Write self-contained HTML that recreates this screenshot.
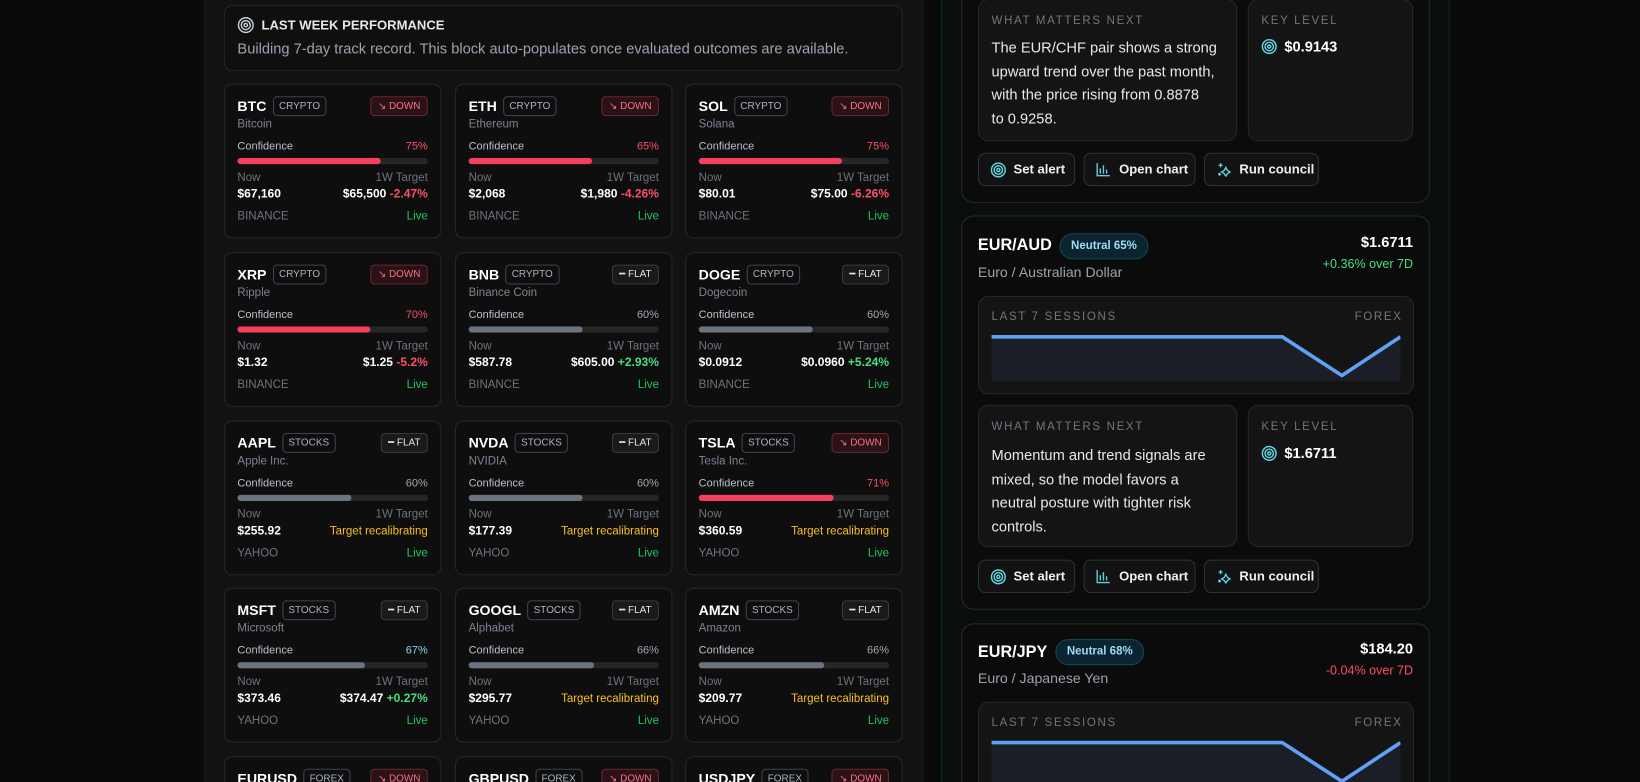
<!DOCTYPE html>
<html><head><meta charset="utf-8">
<style>
*{box-sizing:border-box;margin:0;padding:0}
html,body{width:1640px;height:782px;overflow:hidden;background:#0a0a0a;font-family:"Liberation Sans",sans-serif}
#w{position:absolute;left:0;top:0;width:1568px;height:748px;overflow:hidden;transform:scale(1.04592);transform-origin:0 0}
.abs{position:absolute}
#lp{left:195px;top:0;width:688px;height:748px;background:#121212;border-left:1px solid #1c1c1c;border-right:1px solid #1c1c1c}
#rp{left:900px;top:0;width:486px;height:748px;background:#0a0e0f;border-left:1px solid #0f3036;border-right:1px solid #1a2426}
.hdr{left:214px;top:5px;width:649px;height:63px;border:1px solid #262626;border-radius:8px;background:#0f0f0f}
.hdr .t{position:absolute;left:35px;top:11px;font-size:12.5px;font-weight:bold;color:#e5e7eb}
.hdr .s{position:absolute;left:12px;top:32px;font-size:14px;color:#9aa4b2}
.c{position:absolute;width:208px;height:148px;border:1px solid #262626;border-radius:8px;background:#0e0e0e}
.c .hd{position:absolute;left:12px;top:11px;display:flex;align-items:center;gap:6px}
.c .tk{font-size:13.5px;font-weight:bold;color:#fff}
.c .ty{height:19px;border:1px solid #3a4453;border-radius:4px;font-size:9.5px;color:#aab3bf;padding:0 5px;line-height:17px}
.c .dir{position:absolute;right:12px;top:11px;height:19px;border-radius:4px;font-size:9.5px;padding:0 6px;line-height:17px}
.dn{background:#2a1216;border:1px solid #6b2430;color:#fb7185}
.fl{background:#1a1a1a;border:1px solid #3a3a3a;color:#e5e5e5}
.c .nm{position:absolute;left:12px;top:32px;font-size:11px;color:#7b8491}
.c .cl{position:absolute;left:12px;top:53px;font-size:10.5px;color:#b8c0cc}
.c .cp{position:absolute;right:12px;top:53px;font-size:10.5px}
.c .bar{position:absolute;left:12px;right:12px;top:70px;height:6px;border-radius:3px;background:#262626;overflow:hidden}
.c .bar i{display:block;height:6px;border-radius:3px}
.c .nw{position:absolute;left:12px;top:83px;font-size:11px;color:#6b7480}
.c .tg{position:absolute;right:12px;top:83px;font-size:11px;color:#6b7480}
.c .v1{position:absolute;left:12px;top:99px;font-size:11.5px;font-weight:bold;color:#fff}
.c .v2{position:absolute;right:12px;top:99px;font-size:11.5px;font-weight:bold;color:#fff}
.c .src{position:absolute;left:12px;top:120px;font-size:11px;color:#6b7480}
.c .lv{position:absolute;right:12px;top:120px;font-size:11px;color:#22c55e}
.r{color:#fb5067}.g{color:#4ade80}.c .y{color:#fbbf24;font-weight:normal;font-size:11px}.gy{color:#a0a8b4}
.red{background:#f43f5e}.gr{background:#6b7280}
.rc{position:absolute;left:919px;width:448px;border:1px solid #242a2c;border-radius:12px;background:#0b0b0b}
.box{position:absolute;background:#141414;border:1px solid #272727;border-radius:10px}
.lbl{position:absolute;font-size:11px;letter-spacing:1.6px;color:#6f7580}
.btn{position:absolute;height:32px;border:1px solid #2a323d;border-radius:7px;background:#121212;color:#f0f0f0;font-size:12.5px;font-weight:bold;line-height:30px;padding-left:33px}
.btn svg{position:absolute;left:11px;top:8px}
.pill{position:absolute;height:25px;border:1px solid #164656;border-radius:13px;background:#0b2430;color:#9ddcf5;font-size:11px;font-weight:bold;line-height:23px;padding:0 10px}
.ttl{position:absolute;font-size:15.5px;font-weight:bold;color:#fff}
.sub{position:absolute;font-size:13.5px;color:#9aa3ad}
.pr{position:absolute;font-size:14px;font-weight:bold;color:#fff;text-align:right}
.ch{position:absolute;font-size:12px;text-align:right}
.wt{position:absolute;font-size:14px;line-height:22.5px;color:#e8e8e8;white-space:nowrap}
.kv{position:absolute;font-size:14px;font-weight:bold;color:#fff}
</style></head><body><div id="w">
<div class="abs" id="lp"></div>
<div class="abs" id="rp"></div>

<div class="abs hdr"><svg class="abs" style="left:12px;top:10px" width="16" height="16" viewBox="0 0 16 16" fill="none" stroke="#c9ced6" stroke-width="1.4"><circle cx="8" cy="8" r="7"/><circle cx="8" cy="8" r="4.3"/><circle cx="8" cy="8" r="1.6"/></svg><div class="t">LAST WEEK PERFORMANCE</div><div class="s">Building 7-day track record. This block auto-populates once evaluated outcomes are available.</div></div>

<div class="c" style="left:214px;top:80px"><div class="hd"><span class="tk">BTC</span><span class="ty">CRYPTO</span></div><div class="dir dn">↘ DOWN</div><div class="nm">Bitcoin</div><div class="cl">Confidence</div><div class="cp r">75%</div><div class="bar"><i class="red" style="width:75%"></i></div><div class="nw">Now</div><div class="tg">1W Target</div><div class="v1">$67,160</div><div class="v2">$65,500 <span class="r">-2.47%</span></div><div class="src">BINANCE</div><div class="lv">Live</div></div>
<div class="c" style="left:435px;top:80px"><div class="hd"><span class="tk">ETH</span><span class="ty">CRYPTO</span></div><div class="dir dn">↘ DOWN</div><div class="nm">Ethereum</div><div class="cl">Confidence</div><div class="cp r">65%</div><div class="bar"><i class="red" style="width:65%"></i></div><div class="nw">Now</div><div class="tg">1W Target</div><div class="v1">$2,068</div><div class="v2">$1,980 <span class="r">-4.26%</span></div><div class="src">BINANCE</div><div class="lv">Live</div></div>
<div class="c" style="left:655px;top:80px"><div class="hd"><span class="tk">SOL</span><span class="ty">CRYPTO</span></div><div class="dir dn">↘ DOWN</div><div class="nm">Solana</div><div class="cl">Confidence</div><div class="cp r">75%</div><div class="bar"><i class="red" style="width:75%"></i></div><div class="nw">Now</div><div class="tg">1W Target</div><div class="v1">$80.01</div><div class="v2">$75.00 <span class="r">-6.26%</span></div><div class="src">BINANCE</div><div class="lv">Live</div></div>

<div class="c" style="left:214px;top:241px"><div class="hd"><span class="tk">XRP</span><span class="ty">CRYPTO</span></div><div class="dir dn">↘ DOWN</div><div class="nm">Ripple</div><div class="cl">Confidence</div><div class="cp r">70%</div><div class="bar"><i class="red" style="width:70%"></i></div><div class="nw">Now</div><div class="tg">1W Target</div><div class="v1">$1.32</div><div class="v2">$1.25 <span class="r">-5.2%</span></div><div class="src">BINANCE</div><div class="lv">Live</div></div>
<div class="c" style="left:435px;top:241px"><div class="hd"><span class="tk">BNB</span><span class="ty">CRYPTO</span></div><div class="dir fl">━ FLAT</div><div class="nm">Binance Coin</div><div class="cl">Confidence</div><div class="cp gy">60%</div><div class="bar"><i class="gr" style="width:60%"></i></div><div class="nw">Now</div><div class="tg">1W Target</div><div class="v1">$587.78</div><div class="v2">$605.00 <span class="g">+2.93%</span></div><div class="src">BINANCE</div><div class="lv">Live</div></div>
<div class="c" style="left:655px;top:241px"><div class="hd"><span class="tk">DOGE</span><span class="ty">CRYPTO</span></div><div class="dir fl">━ FLAT</div><div class="nm">Dogecoin</div><div class="cl">Confidence</div><div class="cp gy">60%</div><div class="bar"><i class="gr" style="width:60%"></i></div><div class="nw">Now</div><div class="tg">1W Target</div><div class="v1">$0.0912</div><div class="v2">$0.0960 <span class="g">+5.24%</span></div><div class="src">BINANCE</div><div class="lv">Live</div></div>

<div class="c" style="left:214px;top:402px"><div class="hd"><span class="tk">AAPL</span><span class="ty">STOCKS</span></div><div class="dir fl">━ FLAT</div><div class="nm">Apple Inc.</div><div class="cl">Confidence</div><div class="cp gy">60%</div><div class="bar"><i class="gr" style="width:60%"></i></div><div class="nw">Now</div><div class="tg">1W Target</div><div class="v1">$255.92</div><div class="v2 y">Target recalibrating</div><div class="src">YAHOO</div><div class="lv">Live</div></div>
<div class="c" style="left:435px;top:402px"><div class="hd"><span class="tk">NVDA</span><span class="ty">STOCKS</span></div><div class="dir fl">━ FLAT</div><div class="nm">NVIDIA</div><div class="cl">Confidence</div><div class="cp gy">60%</div><div class="bar"><i class="gr" style="width:60%"></i></div><div class="nw">Now</div><div class="tg">1W Target</div><div class="v1">$177.39</div><div class="v2 y">Target recalibrating</div><div class="src">YAHOO</div><div class="lv">Live</div></div>
<div class="c" style="left:655px;top:402px"><div class="hd"><span class="tk">TSLA</span><span class="ty">STOCKS</span></div><div class="dir dn">↘ DOWN</div><div class="nm">Tesla Inc.</div><div class="cl">Confidence</div><div class="cp r">71%</div><div class="bar"><i class="red" style="width:71%"></i></div><div class="nw">Now</div><div class="tg">1W Target</div><div class="v1">$360.59</div><div class="v2 y">Target recalibrating</div><div class="src">YAHOO</div><div class="lv">Live</div></div>

<div class="c" style="left:214px;top:562px"><div class="hd"><span class="tk">MSFT</span><span class="ty">STOCKS</span></div><div class="dir fl">━ FLAT</div><div class="nm">Microsoft</div><div class="cl">Confidence</div><div class="cp" style="color:#8fd3ef">67%</div><div class="bar"><i class="gr" style="width:67%"></i></div><div class="nw">Now</div><div class="tg">1W Target</div><div class="v1">$373.46</div><div class="v2">$374.47 <span class="g">+0.27%</span></div><div class="src">YAHOO</div><div class="lv">Live</div></div>
<div class="c" style="left:435px;top:562px"><div class="hd"><span class="tk">GOOGL</span><span class="ty">STOCKS</span></div><div class="dir fl">━ FLAT</div><div class="nm">Alphabet</div><div class="cl">Confidence</div><div class="cp gy">66%</div><div class="bar"><i class="gr" style="width:66%"></i></div><div class="nw">Now</div><div class="tg">1W Target</div><div class="v1">$295.77</div><div class="v2 y">Target recalibrating</div><div class="src">YAHOO</div><div class="lv">Live</div></div>
<div class="c" style="left:655px;top:562px"><div class="hd"><span class="tk">AMZN</span><span class="ty">STOCKS</span></div><div class="dir fl">━ FLAT</div><div class="nm">Amazon</div><div class="cl">Confidence</div><div class="cp gy">66%</div><div class="bar"><i class="gr" style="width:66%"></i></div><div class="nw">Now</div><div class="tg">1W Target</div><div class="v1">$209.77</div><div class="v2 y">Target recalibrating</div><div class="src">YAHOO</div><div class="lv">Live</div></div>

<div class="c" style="left:214px;top:723px"><div class="hd"><span class="tk">EURUSD</span><span class="ty">FOREX</span></div><div class="dir dn">↘ DOWN</div></div>
<div class="c" style="left:435px;top:723px"><div class="hd"><span class="tk">GBPUSD</span><span class="ty">FOREX</span></div><div class="dir dn">↘ DOWN</div></div>
<div class="c" style="left:655px;top:723px"><div class="hd"><span class="tk">USDJPY</span><span class="ty">FOREX</span></div><div class="dir dn">↘ DOWN</div></div>

<div class="rc" style="top:-30px;height:224px">
 <div class="box" style="left:15px;top:28px;width:248px;height:136px"><div class="lbl" style="left:12px;top:14px">WHAT MATTERS NEXT</div><div class="wt" style="left:12px;top:34px">The EUR/CHF pair shows a strong<br>upward trend over the past month,<br>with the price rising from 0.8878<br>to 0.9258.</div></div>
 <div class="box" style="left:273px;top:28px;width:158px;height:136px"><div class="lbl" style="left:12px;top:14px">KEY LEVEL</div><svg class="abs" style="left:12px;top:37px" width="15" height="15" viewBox="0 0 16 16" fill="none" stroke="#5fd4e0" stroke-width="1.5"><circle cx="8" cy="8" r="7"/><circle cx="8" cy="8" r="4.3"/><circle cx="8" cy="8" r="1.6"/></svg><div class="kv" style="left:34px;top:36px">$0.9143</div></div>
</div>
<div class="btn" style="left:935px;top:146px;width:93px"><svg width="15" height="15" viewBox="0 0 16 16" fill="none" stroke="#5fd4e0" stroke-width="1.5"><circle cx="8" cy="8" r="7"/><circle cx="8" cy="8" r="4.3"/><circle cx="8" cy="8" r="1.6"/></svg>Set alert</div>
<div class="btn" style="left:1036px;top:146px;width:107px"><svg width="14" height="14" viewBox="0 0 14 14" fill="none" stroke="#5fd4e0" stroke-width="1.3"><path d="M1 1v12h12M4 11V6M7 11V3M10 11V7"/></svg>Open chart</div>
<div class="btn" style="left:1151px;top:146px;width:110px"><svg width="14" height="14" viewBox="0 0 14 14" fill="none" stroke="#5fd4e0" stroke-width="1.3"><path d="M4 1v4M2 3h4M9 5l1.5 3L13 9.5 10.5 11 9 13.5 7.5 11 5 9.5 7.5 8zM3 10v3M1.5 11.5h3"/></svg>Run council</div>

<div class="rc" style="top:206px;height:377px">
 <div class="ttl" style="left:15px;top:19px">EUR/AUD</div>
 <div class="pill" style="left:93px;top:16px">Neutral 65%</div>
 <div class="pr" style="right:15px;top:16px">$1.6711</div>
 <div class="ch g" style="right:15px;top:38px">+0.36% over 7D</div>
 <div class="sub" style="left:15px;top:46px">Euro / Australian Dollar</div>
 <div class="box" style="left:15px;top:76px;width:417px;height:94px"><div class="lbl" style="left:12px;top:13px">LAST 7 SESSIONS</div><div class="lbl" style="right:10px;top:13px">FOREX</div>
  <svg class="abs" style="left:12px;top:33px" width="391" height="48" viewBox="0 0 391 48"><path d="M0 5H278L335 42L391 5V47H0Z" fill="#1b1e26"/><path d="M0 5H278L335 42L391 5" fill="none" stroke="#5ea1f5" stroke-width="3.5" stroke-linejoin="round"/></svg></div>
 <div class="box" style="left:15px;top:180px;width:248px;height:136px"><div class="lbl" style="left:12px;top:14px">WHAT MATTERS NEXT</div><div class="wt" style="left:12px;top:36px">Momentum and trend signals are<br>mixed, so the model favors a<br>neutral posture with tighter risk<br>controls.</div></div>
 <div class="box" style="left:273px;top:180px;width:158px;height:136px"><div class="lbl" style="left:12px;top:14px">KEY LEVEL</div><svg class="abs" style="left:12px;top:38px" width="15" height="15" viewBox="0 0 16 16" fill="none" stroke="#5fd4e0" stroke-width="1.5"><circle cx="8" cy="8" r="7"/><circle cx="8" cy="8" r="4.3"/><circle cx="8" cy="8" r="1.6"/></svg><div class="kv" style="left:34px;top:37px">$1.6711</div></div>
</div>
<div class="btn" style="left:935px;top:535px;width:93px"><svg width="15" height="15" viewBox="0 0 16 16" fill="none" stroke="#5fd4e0" stroke-width="1.5"><circle cx="8" cy="8" r="7"/><circle cx="8" cy="8" r="4.3"/><circle cx="8" cy="8" r="1.6"/></svg>Set alert</div>
<div class="btn" style="left:1036px;top:535px;width:107px"><svg width="14" height="14" viewBox="0 0 14 14" fill="none" stroke="#5fd4e0" stroke-width="1.3"><path d="M1 1v12h12M4 11V6M7 11V3M10 11V7"/></svg>Open chart</div>
<div class="btn" style="left:1151px;top:535px;width:110px"><svg width="14" height="14" viewBox="0 0 14 14" fill="none" stroke="#5fd4e0" stroke-width="1.3"><path d="M4 1v4M2 3h4M9 5l1.5 3L13 9.5 10.5 11 9 13.5 7.5 11 5 9.5 7.5 8zM3 10v3M1.5 11.5h3"/></svg>Run council</div>

<div class="rc" style="top:596px;height:200px">
 <div class="ttl" style="left:15px;top:18px">EUR/JPY</div>
 <div class="pill" style="left:89px;top:14px">Neutral 68%</div>
 <div class="pr" style="right:15px;top:15px">$184.20</div>
 <div class="ch r" style="right:15px;top:37px">-0.04% over 7D</div>
 <div class="sub" style="left:15px;top:44px">Euro / Japanese Yen</div>
 <div class="box" style="left:15px;top:74px;width:417px;height:94px"><div class="lbl" style="left:12px;top:13px">LAST 7 SESSIONS</div><div class="lbl" style="right:10px;top:13px">FOREX</div>
  <svg class="abs" style="left:12px;top:33px" width="391" height="48" viewBox="0 0 391 48"><path d="M0 5H278L335 42L391 5V47H0Z" fill="#1b1e26"/><path d="M0 5H278L335 42L391 5" fill="none" stroke="#5ea1f5" stroke-width="3.5" stroke-linejoin="round"/></svg></div>
</div>
</div></body></html>
